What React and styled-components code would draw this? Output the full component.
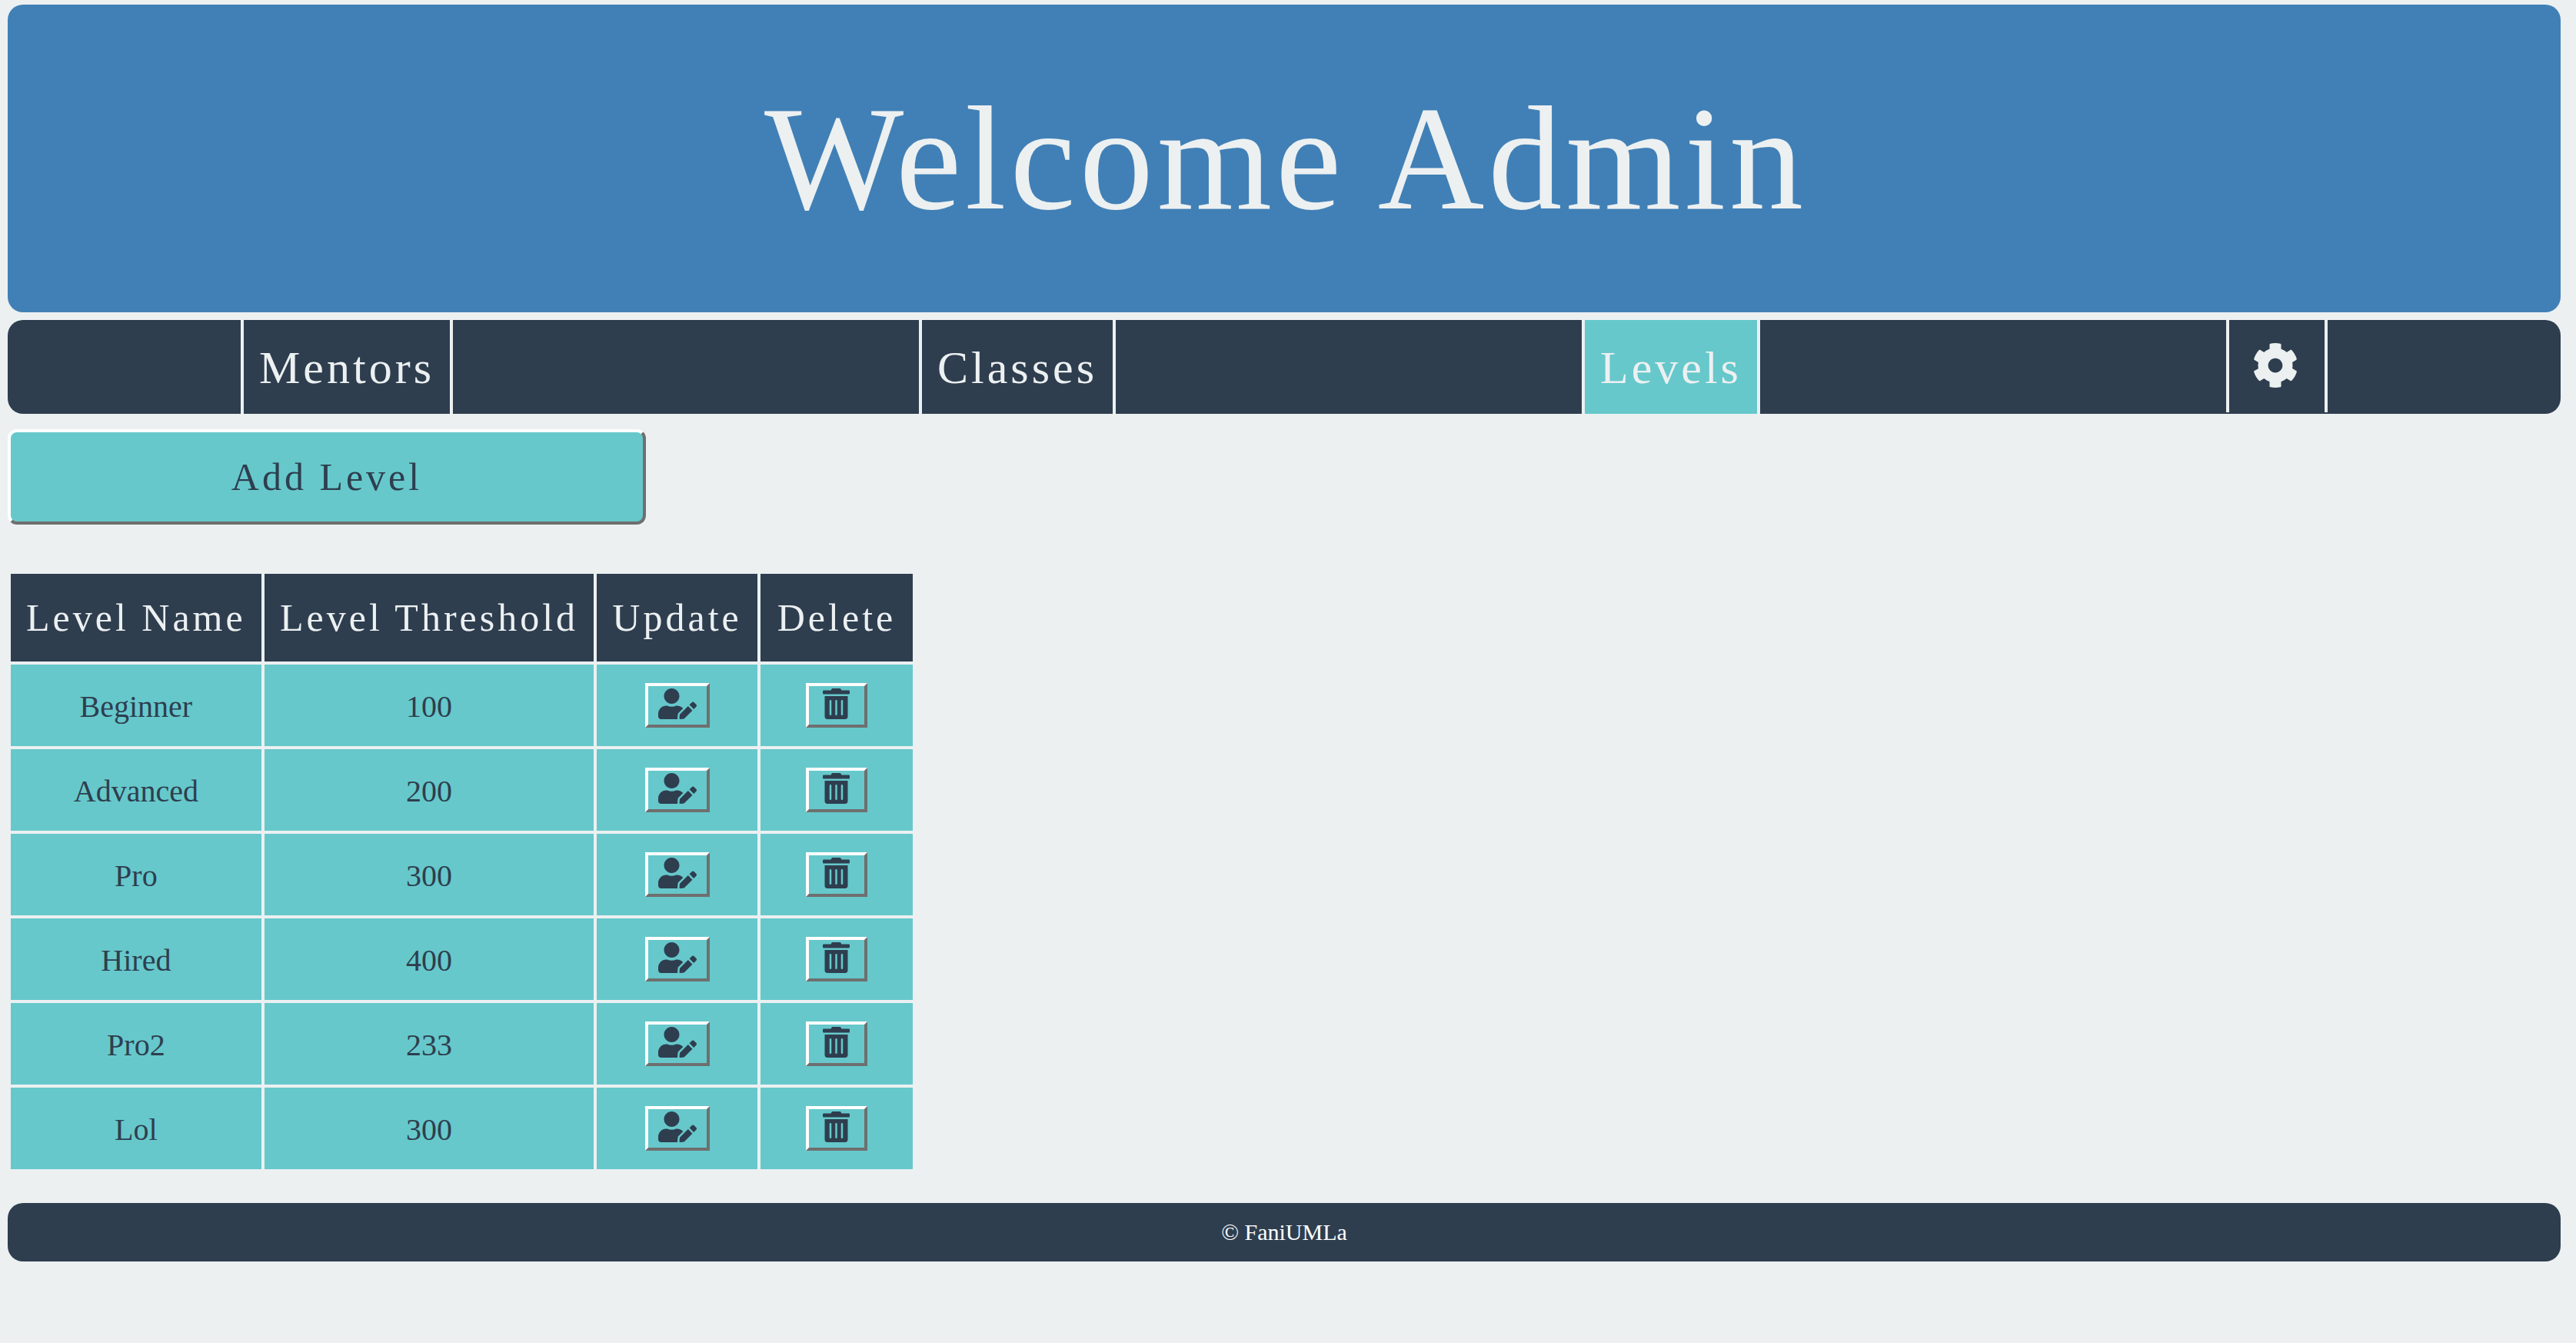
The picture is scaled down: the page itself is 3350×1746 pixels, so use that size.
import React from "react";
import styled, { createGlobalStyle } from "styled-components";
import { FaUserEdit, FaTrashAlt, FaCog } from "react-icons/fa";

const Global = createGlobalStyle`
  html, body { margin: 0; padding: 0; background: #ecf0f1; }
  body { font-family: "Liberation Serif", "Times New Roman", serif; min-height: 1746px; }
`;
const Page = styled.div`
  padding: 6px 20px 0 10px;
  display: flex;
  flex-direction: column;
  align-items: stretch;
`;
const Banner = styled.header`
  height: 400px;
  background: #4180b6;
  border-radius: 20px;
  display: flex;
  align-items: center;
  justify-content: center;
`;
const Title = styled.h1`
  margin: 0 0 0 4px;
  font-size: 192px;
  font-weight: 400;
  letter-spacing: 5px;
  color: #ecf0f1;
`;
const Nav = styled.nav`
  margin-top: 10px;
  height: 122px;
  background: #2e3e4f;
  border-radius: 20px;
  display: flex;
  justify-content: space-around;
  align-items: stretch;
`;
const NavLink = styled.a`
  display: flex;
  align-items: center;
  padding: 2px 20px 0;
  border-left: 4px solid #ecf0f1;
  border-right: 4px solid #ecf0f1;
  font-size: 60px;
  letter-spacing: 4px;
  color: #ecf0f1;
  background: ${(p) => (p.$active ? "#66c8cb" : "transparent")};
`;
const GearLink = styled(NavLink)`
  padding: 0 34px 0 30px;
  margin-bottom: 2px;
  svg { display: block; margin-bottom: 2px; }
`;
const AddButton = styled.button`
  margin-top: 20px;
  align-self: flex-start;
  width: 830px;
  height: 124px;
  background: #66c8cb;
  border: 4px solid;
  border-color: #ffffff #6f6f6f #6f6f6f #ffffff;
  border-radius: 12px;
  font-family: inherit;
  font-size: 50px;
  letter-spacing: 4px;
  color: #2e3e4f;
`;
const Table = styled.table`
  margin-top: 60px;
  align-self: flex-start;
  border-collapse: separate;
  border-spacing: 4px;
`;
const Head = styled.th`
  height: 114px;
  padding: 0 ${(p) => p.$pad || 20}px;
  box-sizing: border-box;
  background: #2e3e4f;
  color: #ecf0f1;
  font-size: 50px;
  font-weight: 400;
  letter-spacing: 4px;
  white-space: nowrap;
`;
const Cell = styled.td`
  height: 106px;
  padding: 2px 0 0;
  box-sizing: border-box;
  background: #66c8cb;
  color: #2e3e4f;
  font-size: 40px;
  text-align: center;
`;
const ActionCell = styled(Cell)`
  padding: 0;
`;
const IconButton = styled.button`
  display: inline-block;
  vertical-align: middle;
  box-sizing: border-box;
  width: ${(p) => p.$w}px;
  height: 58px;
  padding: 3px 0 7px;
  background: transparent;
  border: 4px solid;
  border-color: #ffffff #6f6f6f #6f6f6f #ffffff;
  color: #2e3e4f;
  svg { display: block; margin: 0 auto; height: 40px; width: ${(p) => p.$icon}px; }
`;
const Footer = styled.footer`
  margin-top: 40px;
  height: 76px;
  background: #2e3e4f;
  border-radius: 20px;
  display: flex;
  align-items: center;
  justify-content: center;
  font-size: 30px;
  color: #ffffff;
`;

const rows = [
  ["Beginner", 100],
  ["Advanced", 200],
  ["Pro", 300],
  ["Hired", 400],
  ["Pro2", 233],
  ["Lol", 300],
];

export default function App() {
  return (
    <Page>
      <Global />
      <Banner><Title>Welcome Admin</Title></Banner>
      <Nav>
        <NavLink>Mentors</NavLink>
        <NavLink>Classes</NavLink>
        <NavLink $active>Levels</NavLink>
        <GearLink><FaCog size={60} /></GearLink>
      </Nav>
      <AddButton>Add Level</AddButton>
      <Table>
        <thead>
          <tr>
            <Head>Level Name</Head>
            <Head $pad={20.25}>Level Threshold</Head>
            <Head>Update</Head>
            <Head $pad={22}>Delete</Head>
          </tr>
        </thead>
        <tbody>
          {rows.map(([name, value]) => (
            <tr key={name}>
              <Cell>{name}</Cell>
              <Cell>{value}</Cell>
              <ActionCell><IconButton $w={84} $icon={50}><FaUserEdit /></IconButton></ActionCell>
              <ActionCell><IconButton $w={80} $icon={35}><FaTrashAlt /></IconButton></ActionCell>
            </tr>
          ))}
        </tbody>
      </Table>
      <Footer>© FaniUMLa</Footer>
    </Page>
  );
}
